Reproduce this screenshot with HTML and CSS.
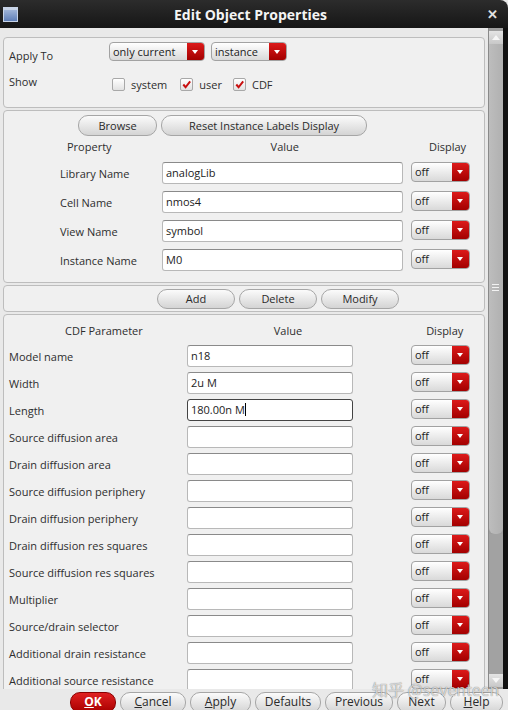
FILE: index.html
```html
<!DOCTYPE html>
<html lang="en">
<head>
    <meta charset="UTF-8">
    <title>Edit Object Properties</title>
<link rel="stylesheet" href="styles.css">
</head>
<body>
<div class="window">
    <div class="titlebar">
        <span class="win-icon"></span>
        <span class="title">Edit Object Properties</span>
        <span class="close">✕</span>
    </div>

    <div class="body">
        <div class="content">

            <div class="panel panel-top">
                <div class="top-row">
                    <span class="top-label">Apply To</span>
                    <span class="combo combo-apply"><span class="combo-text">only current</span><span class="combo-arrow"></span></span>
                    <span class="combo combo-inst"><span class="combo-text">instance</span><span class="combo-arrow"></span></span>
                </div>
                <div class="top-row show-row">
                    <span class="top-label">Show</span>
                    <span class="check"></span><span class="check-text check-system">system</span>
                    <span class="check checked"><svg viewBox="0 0 12 12"><path d="M2.5 6 L5 9 L10 2.5" /></svg></span><span class="check-text check-user">user</span>
                    <span class="check checked"><svg viewBox="0 0 12 12"><path d="M2.5 6 L5 9 L10 2.5" /></svg></span><span class="check-text">CDF</span>
                </div>
            </div>

            <div class="panel panel-props">
                <div class="props-btns">
                    <span class="btn btn-browse">Browse</span>
                    <span class="btn btn-reset">Reset Instance Labels Display</span>
                </div>
                <div class="props-head">
                    <span class="head-prop">Property</span>
                    <span class="head-value">Value</span>
                    <span class="head-display">Display</span>
                </div>
                <div class="props-grid">
                    <span class="prop-label">Library Name</span>
                    <span class="field">analogLib</span>
                    <span class="combo combo-off"><span class="combo-text">off</span><span class="combo-arrow"></span></span>

                    <span class="prop-label">Cell Name</span>
                    <span class="field">nmos4</span>
                    <span class="combo combo-off"><span class="combo-text">off</span><span class="combo-arrow"></span></span>

                    <span class="prop-label">View Name</span>
                    <span class="field">symbol</span>
                    <span class="combo combo-off"><span class="combo-text">off</span><span class="combo-arrow"></span></span>

                    <span class="prop-label">Instance Name</span>
                    <span class="field">M0</span>
                    <span class="combo combo-off"><span class="combo-text">off</span><span class="combo-arrow"></span></span>
                </div>
            </div>

            <div class="panel panel-actions">
                <span class="btn btn-add">Add</span>
                <span class="btn btn-delete">Delete</span>
                <span class="btn btn-modify">Modify</span>
            </div>

            <div class="panel panel-cdf">
                <div class="cdf-head">
                    <span class="head-cdf">CDF Parameter</span>
                    <span class="head-cdf-value">Value</span>
                    <span class="head-display">Display</span>
                </div>
                <div class="cdf-grid" id="cdfGrid"></div>
            </div>

        </div>

        <div class="scrollbar">
            <div class="scroll-up"><span></span></div>
            <div class="scroll-thumb"><span class="grip"></span></div>
            <div class="scroll-track"></div>
            <div class="scroll-down"><span></span></div>
        </div>
        <div class="edge"></div>
    </div>

    <div class="footer">
        <span class="btn btn-ok"><u>O</u>K</span>
        <span class="btn btn-cancel"><u>C</u>ancel</span>
        <span class="btn btn-apply"><u>A</u>pply</span>
        <span class="btn btn-defaults">Defaults</span>
        <span class="btn btn-previous">Previous</span>
        <span class="btn btn-next">Next</span>
        <span class="btn btn-help"><u>H</u>elp</span>
        <span class="watermark">知乎 @seventeen</span>
    </div>
</div>

<script>
    const params = [
        ['Model name', 'n18'],
        ['Width', '2u M'],
        ['Length', '180.00n M'],
        ['Source diffusion area', ''],
        ['Drain diffusion area', ''],
        ['Source diffusion periphery', ''],
        ['Drain diffusion periphery', ''],
        ['Drain diffusion res squares', ''],
        ['Source diffusion res squares', ''],
        ['Multiplier', ''],
        ['Source/drain selector', ''],
        ['Additional drain resistance', ''],
        ['Additional source resistance', '']
    ];

    let html = '';
    params.forEach(function (p) {
        const focus = p[0] === 'Length' ? ' field-focus' : '';
        const cursor = p[0] === 'Length' ? '<span class="caret"></span>' : '';
        html += `
            <span class="cdf-label">${p[0]}</span>
            <span class="field cdf-field${focus}">${p[1]}${cursor}</span>
            <span class="combo combo-off"><span class="combo-text">off</span><span class="combo-arrow"></span></span>`;
    });
    document.getElementById('cdfGrid').innerHTML = html;
</script>
</body>
</html>
```

FILE: styles.css
```css
body {
    margin: 0;
    background-color: #000;
    font-family: "Open Sans", "Noto Sans", sans-serif;
    font-size: 11px;
    color: #2e2e2e;
}

.window {
    width: 508px;
    height: 710px;
    overflow: hidden;
    background-color: #e9e9e9;
    display: flex;
    flex-direction: column;
}

/* title bar */
.titlebar {
    height: 28px;
    flex: none;
    display: flex;
    align-items: center;
    background: linear-gradient(#2c2c2c, #161616);
    border-top-right-radius: 8px;
}
.win-icon {
    width: 13px;
    height: 11px;
    margin-left: 3px;
    border: 1px solid #c8d4e8;
    border-top-width: 3px;
    background: linear-gradient(#9fb4d8, #5f7fb8);
}
.title {
    flex: 1;
    text-align: center;
    color: #f4f4f4;
    font-weight: bold;
    font-size: 14px;
    margin-left: -4px;
}
.close {
    color: #e0e0e0;
    font-size: 13px;
    font-weight: bold;
    margin-right: 10px;
}

/* main */
.body {
    height: 661px;
    flex: none;
    display: flex;
}
.content {
    width: 486px;
    padding: 9px 1px 0 3px;
    overflow: hidden;
    box-sizing: border-box;
}
.panel {
    box-sizing: border-box;
    background-color: #f0f0f0;
    border: 1px solid #bdbdbd;
    border-radius: 4px;
    margin-bottom: 2px;
}

.panel-top {
    height: 71px;
    padding: 3px 0 0 5px;
}
.top-row {
    display: flex;
    align-items: center;
    height: 21px;
}
.top-label {
    width: 100px;
    padding-top: 7px;
}
.show-row {
    margin-top: 12px;
}
.show-row .top-label {
    padding-top: 0;
    margin-top: -6px;
}

/* combo boxes */
.combo {
    display: inline-flex;
    height: 19px;
    border: 1px solid #a2a2a2;
    border-radius: 4px;
    background: linear-gradient(#ffffff, #d9d9d9);
    overflow: hidden;
    box-sizing: border-box;
}
.combo-text {
    flex: 1;
    padding-left: 3px;
    line-height: 17px;
    color: #222;
}
.combo-arrow {
    width: 17px;
    background: linear-gradient(#dc1a1a, #a30000);
    position: relative;
}
.combo-arrow::after {
    content: "";
    position: absolute;
    left: 5px;
    top: 7px;
    border-left: 3.5px solid transparent;
    border-right: 3.5px solid transparent;
    border-top: 4px solid #fff;
}
.combo-apply {
    width: 96px;
}
.combo-inst {
    width: 76px;
    margin-left: 6px;
}
.combo-off {
    width: 59px;
    height: 20px;
    margin-top: -2px;
}
.combo-off .combo-text {
    line-height: 18px;
}

/* check boxes */
.check {
    width: 11px;
    height: 11px;
    border: 1px solid #a8a8a8;
    border-radius: 2px;
    background: linear-gradient(#ffffff, #e2e2e2);
    margin-left: 3px;
}
.check svg {
    width: 11px;
    height: 11px;
    display: block;
}
.check svg path {
    fill: none;
    stroke: #c80f0f;
    stroke-width: 2.2;
}
.check-text {
    margin-left: 6px;
}
.check-system {
    margin-right: 10px;
}
.check-user {
    margin-right: 8px;
}

/* buttons */
.btn {
    display: inline-block;
    height: 21px;
    line-height: 19px;
    box-sizing: border-box;
    text-align: center;
    border: 1px solid #a6a6a6;
    border-radius: 10px;
    background: linear-gradient(#fbfbfb, #d4d4d4);
    color: #2a2a2a;
}

/* property panel */
.panel-props {
    height: 173px;
}
.props-btns {
    padding: 4px 0 0 74px;
    display: flex;
    gap: 4px;
}
.btn-browse {
    width: 79px;
}
.btn-reset {
    width: 206px;
}
.props-head {
    display: flex;
    height: 21px;
    align-items: center;
}
.head-prop {
    margin-left: 63px;
}
.head-value {
    margin-left: 159px;
}
.props-head .head-display {
    margin-left: 130px;
}
.props-grid {
    display: grid;
    grid-template-columns: 94px 241px 59px;
    grid-auto-rows: 22px;
    row-gap: 7px;
    column-gap: 8px;
    padding: 5px 0 0 56px;
    align-items: center;
}
.prop-label {
    padding-top: 1px;
}

.field {
    height: 22px;
    box-sizing: border-box;
    background-color: #fff;
    border: 1px solid #b8b8b8;
    border-top-color: #8a8a8a;
    border-radius: 3px;
    padding-left: 3px;
    line-height: 20px;
    color: #222;
}

/* action buttons */
.panel-actions {
    height: 27px;
    display: flex;
    gap: 4px;
    padding-left: 153px;
    align-items: center;
}
.btn-add, .btn-delete, .btn-modify {
    width: 78px;
    height: 20px;
    line-height: 18px;
}

/* cdf panel */
.panel-cdf {
    height: 420px;
}
.cdf-head {
    display: flex;
    height: 30px;
    align-items: center;
}
.head-cdf {
    margin-left: 61px;
}
.head-cdf-value {
    margin-left: 131px;
}
.cdf-head .head-display {
    margin-left: 124px;
}
.cdf-grid {
    display: grid;
    grid-template-columns: 178px 224px 59px;
    grid-auto-rows: 22px;
    row-gap: 5px;
    padding-left: 5px;
    align-items: center;
}
.cdf-field {
    width: 166px;
}
.cdf-label {
    padding-top: 1px;
}
.field-focus {
    border-color: #444;
}
.caret {
    display: inline-block;
    width: 1px;
    height: 13px;
    background-color: #000;
    vertical-align: -2px;
}

/* scrollbar */
.scrollbar {
    width: 14px;
    margin-left: 2px;
    display: flex;
    flex-direction: column;
    background-color: #9e9e9e;
    border-left: 1px solid #8a8a8a;
}
.scroll-up, .scroll-down {
    height: 13px;
    background: linear-gradient(#e4e4e4, #c8c8c8);
    position: relative;
    flex: none;
}
.scroll-up {
    margin-top: 3px;
}
.scroll-up span, .scroll-down span {
    position: absolute;
    left: 3px;
    top: 4px;
    border-left: 4px solid transparent;
    border-right: 4px solid transparent;
    border-bottom: 5px solid #f6f6f6;
}
.scroll-down span {
    border-bottom: none;
    border-top: 5px solid #f6f6f6;
}
.scroll-thumb {
    height: 490px;
    flex: none;
    background: linear-gradient(90deg, #bdbdbd, #b0b0b0);
    border-radius: 0 0 6px 6px;
    position: relative;
}
.grip {
    position: absolute;
    left: 3px;
    top: 240px;
    width: 7px;
    height: 7px;
    border-top: 1px solid #f2f2f2;
    border-bottom: 1px solid #f2f2f2;
    box-sizing: border-box;
}
.grip::after {
    content: "";
    position: absolute;
    left: 0;
    right: 0;
    top: 2px;
    border-top: 1px solid #f2f2f2;
}
.scroll-track {
    flex: 1;
    background-color: #a2a2a2;
}
.scroll-down {
    margin-bottom: 2px;
}
.edge {
    width: 5px;
    background-color: #111;
}

/* footer */
.footer {
    height: 21px;
    flex: none;
    display: flex;
    gap: 4px;
    padding: 3px 0 0 70px;
    align-items: flex-start;
    position: relative;
}
.footer .btn {
    height: 21px;
    line-height: 18px;
    font-size: 12px;
}
.btn-ok {
    width: 46px;
    background: linear-gradient(#e02020, #a80000);
    border-color: #8a0000;
    color: #fff;
    font-weight: bold;
}
.btn-cancel { width: 66px; }
.btn-apply { width: 61px; }
.btn-defaults { width: 66px; }
.btn-previous { width: 68px; }
.btn-next { width: 49px; }
.btn-help { width: 53px; }

.watermark {
    position: absolute;
    left: 372px;
    top: -12px;
    color: rgba(255, 255, 255, 0.7);
    font-size: 16px;
    font-family: "Noto Sans CJK SC", "Noto Sans", sans-serif;
    text-shadow: 0 0 1px rgba(0, 0, 0, 0.6);
}
```
